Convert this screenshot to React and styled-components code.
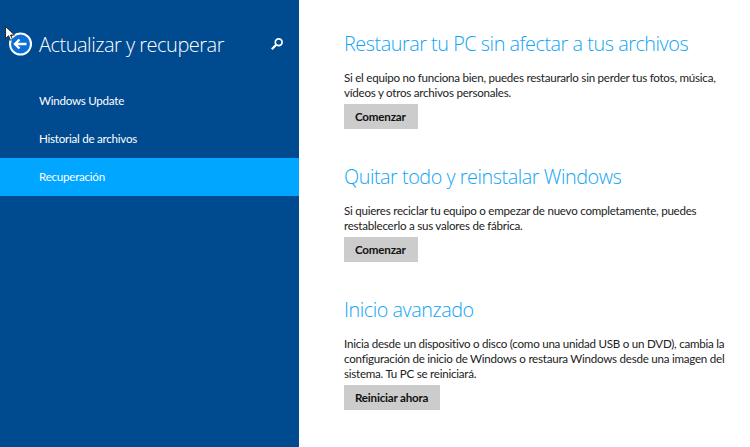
import React from "react";
import styled, { createGlobalStyle } from "styled-components";

const GlobalStyle = createGlobalStyle`
  html, body {
    margin: 0;
    padding: 0;
    background: #fff;
  }
  body {
    font-family: "Open Sans", "Noto Sans", "Liberation Sans", sans-serif;
  }
`;

const Page = styled.div`
  position: relative;
  display: flex;
  width: 750px;
  height: 447px;
  overflow: hidden;
`;

const Sidebar = styled.aside`
  flex: 0 0 299px;
  background: #004a8f;
  color: #fff;
`;

const SideHeader = styled.div`
  display: flex;
  align-items: center;
  height: 36px;
  margin-top: 26px;
  padding-left: 7px;
`;

const BackButton = styled.svg`
  flex: none;
  width: 27px;
  height: 27px;
  margin-right: 5px;
`;

const SideTitle = styled.h1`
  flex: 1;
  margin: 0;
  font-size: 20px;
  font-weight: 300;
  letter-spacing: -0.5px;
  white-space: nowrap;
`;

const SearchIcon = styled.svg`
  flex: none;
  width: 14px;
  height: 14px;
  margin-right: 15px;
`;

const Nav = styled.nav`
  display: flex;
  flex-direction: column;
  margin-top: 20px;
`;

const NavItem = styled.div`
  display: flex;
  align-items: center;
  height: 38px;
  padding: 0 0 2px 39px;
  box-sizing: border-box;
  font-family: "Lato", "Open Sans", sans-serif;
  font-size: 11.6px;
  letter-spacing: -0.25px;
  background: ${(p) => (p.$active ? "#00a6ff" : "transparent")};
`;

const Main = styled.main`
  flex: 1;
  padding: 30px 0 0 45px;
`;

const Section = styled.section`
  margin-bottom: 34px;
`;

const Heading = styled.h2`
  margin: 0 0 13px;
  font-size: 19.8px;
  line-height: 27px;
  font-weight: 300;
  letter-spacing: -0.45px;
  color: #10a5f5;
  white-space: nowrap;
`;

const Body = styled.p`
  margin: 0 0 4px;
  font-family: "Lato", "Open Sans", sans-serif;
  font-size: 11.6px;
  line-height: 15px;
  letter-spacing: -0.25px;
  color: #222;
  white-space: nowrap;
`;

const ActionButton = styled.button`
  display: block;
  height: 25px;
  padding: 0 12px 0 11px;
  border: 0;
  background: #cccccc;
  color: #111;
  font-family: "Lato", "Open Sans", sans-serif;
  font-size: 11.6px;
  font-weight: 700;
  letter-spacing: -0.2px;
`;

const Cursor = styled.svg`
  position: absolute;
  left: 5px;
  top: 26px;
  width: 10px;
  height: 15px;
`;

const sections = [
  {
    title: "Restaurar tu PC sin afectar a tus archivos",
    lines: [
      "Si el equipo no funciona bien, puedes restaurarlo sin perder tus fotos, música,",
      "vídeos y otros archivos personales.",
    ],
    action: "Comenzar",
  },
  {
    title: "Quitar todo y reinstalar Windows",
    lines: [
      "Si quieres reciclar tu equipo o empezar de nuevo completamente, puedes",
      "restablecerlo a sus valores de fábrica.",
    ],
    action: "Comenzar",
  },
  {
    title: "Inicio avanzado",
    lines: [
      "Inicia desde un dispositivo o disco (como una unidad USB o un DVD), cambia la",
      "configuración de inicio de Windows o restaura Windows desde una imagen del",
      "sistema. Tu PC se reiniciará.",
    ],
    action: "Reiniciar ahora",
  },
];

export default function App() {
  return (
    <>
      <GlobalStyle />
      <Page>
        <Sidebar>
          <SideHeader>
            <BackButton viewBox="0 0 27 27">
              <circle cx="13.5" cy="13" r="10.5" fill="#0a6fd6" stroke="#fff" strokeWidth="2" />
              <path d="M19.5 13H8.5M12.5 8.5l-4.5 4.5 4.5 4.5" fill="none" stroke="#fff" strokeWidth="2.4" />
            </BackButton>
            <SideTitle>Actualizar y recuperar</SideTitle>
            <SearchIcon viewBox="0 0 14 14">
              <circle cx="8.7" cy="5.3" r="3.4" fill="none" stroke="#fff" strokeWidth="1.7" />
              <path d="M6.2 7.8 1.8 12.2" stroke="#fff" strokeWidth="2.2" />
            </SearchIcon>
          </SideHeader>
          <Nav>
            <NavItem>Windows Update</NavItem>
            <NavItem>Historial de archivos</NavItem>
            <NavItem $active>Recuperación</NavItem>
          </Nav>
        </Sidebar>
        <Main>
          {sections.map((s) => (
            <Section key={s.title}>
              <Heading>{s.title}</Heading>
              <Body>
                {s.lines.map((line) => (
                  <React.Fragment key={line}>
                    {line}
                    <br />
                  </React.Fragment>
                ))}
              </Body>
              <ActionButton>{s.action}</ActionButton>
            </Section>
          ))}
        </Main>
        <Cursor viewBox="0 0 10 15">
          <path d="M.5.5v12l3-2.8 2 4.6 2-.9-2-4.4h4z" fill="#fff" stroke="#111" strokeWidth=".8" />
        </Cursor>
      </Page>
    </>
  );
}
